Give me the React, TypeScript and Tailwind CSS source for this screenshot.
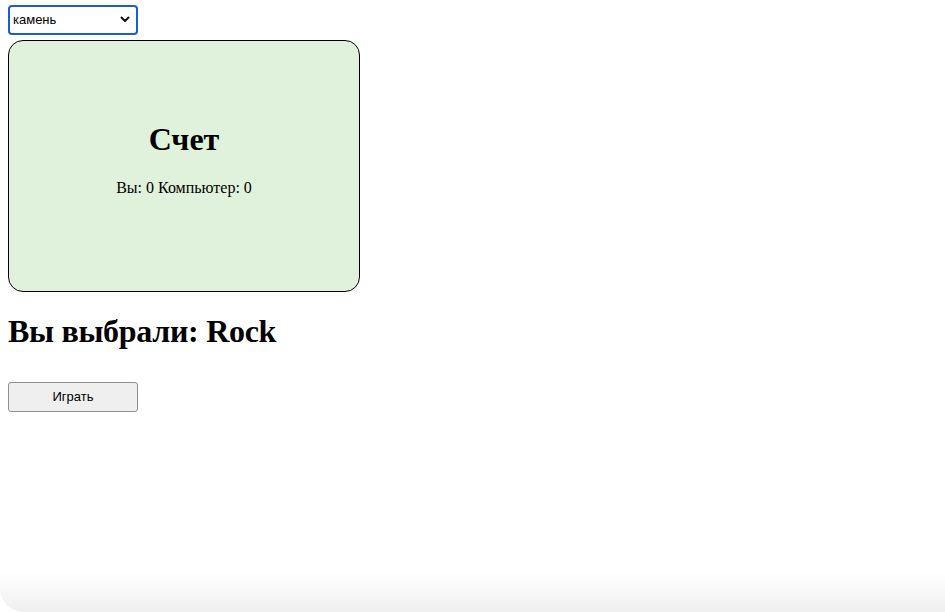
import React, { useState } from 'react'

const serif = "font-['Liberation_Serif','Times_New_Roman',serif]"
const sans = "font-['Liberation_Sans',Arial,sans-serif]"

export default function App() {
  const [choice, setChoice] = useState('rock')
  const [score] = useState({ you: 0, computer: 0 })

  const names: Record<string, string> = { rock: 'Rock', paper: 'Paper', scissors: 'Scissors' }

  return (
    <div className={`min-h-[612px] bg-white px-2 pt-[5px] text-black ${serif}`}>
      {/* выбор */}
      <div className="relative w-[130px]">
        <select
          value={choice}
          onChange={(e) => setChoice(e.target.value)}
          className={`h-[30px] w-[130px] appearance-none rounded-[4px] border-2 border-[#1d5ad8] bg-white pl-[3px] text-[13px] text-black outline-none ${sans}`}
        >
          <option value="rock">камень</option>
          <option value="paper">бумага</option>
          <option value="scissors">ножницы</option>
        </select>
        <svg
          className="pointer-events-none absolute right-[8px] top-[11px]"
          width="10"
          height="7"
          viewBox="0 0 10 7"
        >
          <path d="M1.5 1.5 L5 5 L8.5 1.5" fill="none" stroke="#111" strokeWidth="2" strokeLinecap="round" strokeLinejoin="round" />
        </svg>
      </div>

      {/* счет */}
      <div className="mt-[5px] h-[252px] w-[352px] rounded-[15px] border border-black bg-[#e1f2dc] pt-[80px] text-center">
        <h2 className="text-[32px] font-bold leading-[37px]">Счет</h2>
        <p className="mt-[21px] text-[16px] leading-[18px]">
          Вы: {score.you} Компьютер: {score.computer}
        </p>
      </div>

      <h1 className="mt-[21px] text-[32px] font-bold leading-[37px] tracking-[-0.3px]">Вы выбрали: {names[choice]}</h1>

      <button
        className={`mt-[32px] h-[30px] w-[130px] rounded-[3px] border border-[#8f8f8f] bg-[#efefef] text-[13px] text-black ${sans}`}
      >
        Играть
      </button>

      <div className="pointer-events-none fixed bottom-0 left-0 h-[40px] w-full rounded-bl-[24px] bg-gradient-to-b from-white/0 to-[#efefef]"></div>
    </div>
  )
}
